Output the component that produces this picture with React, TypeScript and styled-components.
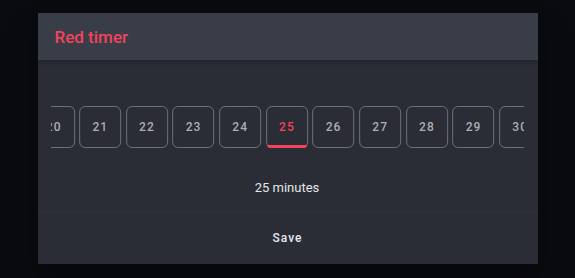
import React, { useState } from 'react';
import styled, { createGlobalStyle } from 'styled-components';

const CHIP_WIDTH = 42;
const CHIP_GAP = 4.67;
const TRACK_WIDTH = 473;
const VISIBLE_EACH_SIDE = 5;

const App: React.FC = () => {
  const [selected, setSelected] = useState(25);

  // only the chips around the selection are rendered, the strip is shifted so the selected one sits in the middle
  const minutes = Array.from({ length: VISIBLE_EACH_SIDE * 2 + 1 }, (_, i) => selected - VISIBLE_EACH_SIDE + i);
  const pitch = CHIP_WIDTH + CHIP_GAP;
  const offset = TRACK_WIDTH / 2 - (VISIBLE_EACH_SIDE * pitch + CHIP_WIDTH / 2);

  return (
    <>
      <GlobalStyle />
      <Page>
        <Dialog>
          <Header>
            <Title>Red timer</Title>
          </Header>
          <Body>
            <Track>
              <Strip style={{ transform: `translateX(${offset}px)` }}>
                {minutes.map((m) => (
                  <Chip key={m} $active={m === selected} onClick={() => setSelected(m)}>
                    {m}
                  </Chip>
                ))}
              </Strip>
            </Track>
            <Summary>{selected} minutes</Summary>
          </Body>
          <Footer>
            <SaveButton>Save</SaveButton>
          </Footer>
        </Dialog>
      </Page>
    </>
  );
};

const GlobalStyle = createGlobalStyle`
  body {
    margin: 0;
    background: #0a0b0f;
    font-family: Roboto, "Liberation Sans", sans-serif;
  }
`;

const Page = styled.div`
  width: 575px;
  height: 278px;
  padding-top: 13px;
  box-sizing: border-box;
  display: flex;
  justify-content: center;
  align-items: flex-start;
`;

const Dialog = styled.div`
  width: 500px;
  background: #2a2d36;
  box-shadow: 0 11px 15px -7px rgba(0, 0, 0, 0.2), 0 24px 38px 3px rgba(0, 0, 0, 0.14);
  overflow: hidden;
`;

const Header = styled.div`
  height: 47px;
  padding: 0 17px;
  display: flex;
  align-items: center;
  background: #393d48;
  box-shadow: 0 2px 4px rgba(0, 0, 0, 0.25);
  position: relative;
`;

const Title = styled.h2`
  margin: 0;
  font-size: 17px;
  font-weight: 500;
  color: #f2435b;
`;

const Body = styled.div`
  padding: 46px 14px 13px 13px;
`;

const Track = styled.div`
  width: ${TRACK_WIDTH}px;
  overflow: hidden;
`;

const Strip = styled.div`
  display: flex;
  gap: ${CHIP_GAP}px;
`;

const Chip = styled.button<{ $active: boolean }>`
  position: relative;
  flex: 0 0 ${CHIP_WIDTH}px;
  height: 42px;
  padding: 0;
  border: 1px solid #6d7077;
  border-radius: 6px;
  background: transparent;
  color: ${(p) => (p.$active ? '#f2435b' : '#abaeb5')};
  font-family: Roboto, "Liberation Sans", sans-serif;
  font-size: 12px;
  font-weight: 500;
  letter-spacing: 1.1px;
  cursor: pointer;

  &::after {
    content: '';
    display: ${(p) => (p.$active ? 'block' : 'none')};
    position: absolute;
    left: 0;
    right: 0;
    bottom: -1px;
    height: 3px;
    border-radius: 0 0 4px 4px;
    background: #f2435b;
  }
`;

const Summary = styled.div`
  margin-top: 30px;
  text-align: center;
  font-size: 13px;
  line-height: 20px;
  color: #e4e5e8;
`;

const Footer = styled.div`
  height: 52px;
  border-top: 1px solid #2e313a;
  display: flex;
  align-items: center;
  justify-content: center;
`;

const SaveButton = styled.button`
  height: 36px;
  padding: 0 16px;
  border: none;
  background: transparent;
  color: #e6e7ea;
  font-family: Roboto, "Liberation Sans", sans-serif;
  font-size: 12px;
  font-weight: 500;
  letter-spacing: 1px;
  cursor: pointer;
`;

export default App;
